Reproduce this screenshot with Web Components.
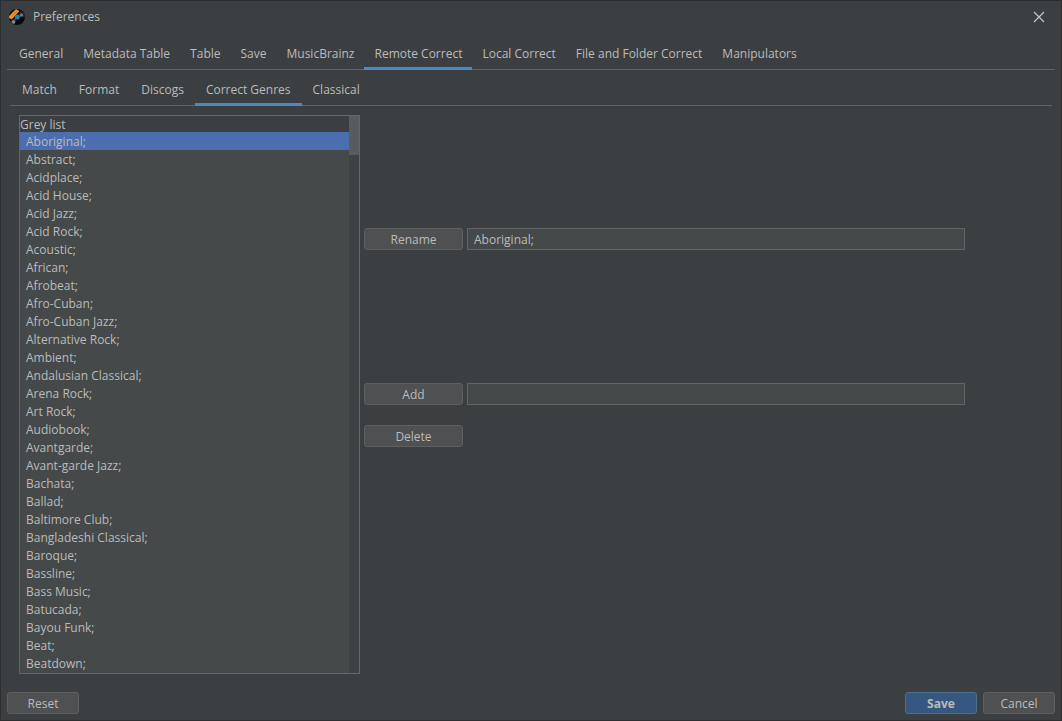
<!DOCTYPE html>
<html lang="en">
<head>
<meta charset="utf-8">
<title>Preferences</title>
<style>
  body {
    margin: 0;
    background: #3c3f41;
    color: #bbbbbb;
    font: 12px/18px "Open Sans", "Noto Sans", sans-serif;
  }
</style>
</head>
<body>
<preferences-window></preferences-window>
<script>
  const define = (name, html, setup) => {
    const template = document.createElement('template');
    template.innerHTML = html;
    customElements.define(name, class extends HTMLElement {
      connectedCallback() {
        if (this.shadowRoot) return;
        const root = this.attachShadow({ mode: 'open' });
        root.append(template.content.cloneNode(true));
        if (setup) setup(this, root);
      }
    });
  };

  // Window title bar with the application icon and the close control.
  define('title-bar', `
    <style>
      :host { display: flex; align-items: center; height: 31px; padding: 0 16px 0 8px; gap: 8px; }
      h1 { flex: 1; margin: 0; font: inherit; }
      svg { display: block; }
      button { padding: 0; border: 0; background: none; color: #c4c4c4; }
    </style>
    <svg width="16" height="16" viewBox="0 0 16 16" aria-hidden="true">
      <defs><clipPath id="disc"><circle cx="8" cy="8" r="8"/></clipPath></defs>
      <g clip-path="url(#disc)">
        <rect width="16" height="16" fill="#09090b"/>
        <path d="M8 8 12 2 16 5V8Z" fill="#2c2e30"/>
        <path d="M8 8 2 12 5 16Z" fill="#3c3e40"/>
        <circle cx="12.5" cy="6" r="1.6" fill="#77797b"/>
        <circle cx="4.5" cy="13" r="1.8" fill="#8b8b8b"/>
        <path d="M0 7 7 0 10.5 2 2.5 10.5 0 9Z" fill="#f28c28"/>
        <path d="M3.5 6.5 8.5 1.5" stroke="#b8641a" stroke-width=".6"/>
      </g>
      <circle cx="8.3" cy="8" r="2.5" fill="#0b83c9"/>
    </svg>
    <h1><slot></slot></h1>
    <button type="button" aria-label="Close">
      <svg width="12" height="12" viewBox="0 0 12 12"><path d="M1 1 11 11M11 1 1 11" stroke="currentColor" stroke-width="1.2"/></svg>
    </button>`);

  // Row of tabs; labels come from the "tabs" attribute, separated by "|".
  define('tab-strip', `
    <style>
      :host { display: block; --tab-padding: 10px; --tab-inset: 2px; }
      :host([nested]) { --tab-padding: 11px; --tab-inset: 1px; }
      div { display: flex; padding-left: var(--tab-inset); border-bottom: 1px solid #616365; }
      button {
        height: 33px; margin: 0 0 -1px; padding: 0 var(--tab-padding); border: 0; background: none;
        color: inherit; font: inherit; white-space: nowrap;
      }
      button[aria-selected="true"] { box-shadow: inset 0 -3px #4a88c7; }
    </style>
    <div role="tablist"></div>`, (host, root) => {
      const list = root.querySelector('div');
      for (const label of host.getAttribute('tabs').split('|')) {
        const tab = document.createElement('button');
        tab.type = 'button';
        tab.setAttribute('role', 'tab');
        tab.setAttribute('aria-selected', label === host.getAttribute('selected'));
        tab.textContent = label;
        list.append(tab);
      }
    });

  define('push-button', `
    <style>
      :host { display: block; width: 72px; }
      :host([wide]) { width: 99px; }
      button {
        display: block; box-sizing: border-box; width: 100%; height: 22px; padding: 2px 0 0;
        border: 1px solid #5e6060; border-radius: 3px;
        background: #4e5052; color: #bbbbbb; font: inherit;
      }
      :host([primary]) button { background: #365880; border-color: #4c708c; font-weight: 700; }
    </style>
    <button type="button"><slot></slot></button>`);

  define('text-field', `
    <style>
      :host { display: block; }
      input {
        display: block; box-sizing: border-box; width: 100%; height: 22px; padding: 0 6px;
        border: 1px solid #646464; border-radius: 0; outline: 0;
        background: #45494a; color: #bbbbbb; font: inherit;
      }
    </style>
    <input type="text">`, (host, root) => {
      const input = root.querySelector('input');
      input.setAttribute('aria-label', host.getAttribute('label'));
      input.value = host.getAttribute('value') || '';
    });

  // Titled genre list with a vertical scroll track.
  define('genre-list', `
    <style>
      :host { display: flex; box-sizing: border-box; width: 341px; border: 1px solid #466d94; }
      section { flex: 1; padding-bottom: 1px; background: #45494a; }
      h2 { margin: 0; height: 16px; background: #3c3f41; font: inherit; line-height: 18px; }
      ul { margin: 0; padding: 0; list-style: none; }
      li { height: 18px; padding: 0 6px; line-height: 20px; }
      li[aria-selected="true"] { background: #4b6eaf; }
      .track { width: 10px; background: #3e4244; }
      .thumb { height: 39px; background: #585c5e; }
    </style>
    <section>
      <h2 id="caption">Grey list</h2>
      <ul role="listbox" aria-labelledby="caption" tabindex="-1"></ul>
    </section>
    <div class="track"><div class="thumb"></div></div>`, (host, root) => {
      const genres = ['Aboriginal', 'Abstract', 'Acidplace', 'Acid House', 'Acid Jazz', 'Acid Rock',
        'Acoustic', 'African', 'Afrobeat', 'Afro-Cuban', 'Afro-Cuban Jazz', 'Alternative Rock',
        'Ambient', 'Andalusian Classical', 'Arena Rock', 'Art Rock', 'Audiobook', 'Avantgarde',
        'Avant-garde Jazz', 'Bachata', 'Ballad', 'Baltimore Club', 'Bangladeshi Classical',
        'Baroque', 'Bassline', 'Bass Music', 'Batucada', 'Bayou Funk', 'Beat', 'Beatdown'];
      const list = root.querySelector('ul');
      genres.forEach((genre, index) => {
        const item = document.createElement('li');
        item.setAttribute('role', 'option');
        item.setAttribute('aria-selected', index === 0);
        item.textContent = genre + ';';
        list.append(item);
      });
    });

  define('genre-editor', `
    <style>
      :host { display: flex; align-items: flex-start; gap: 4px; padding: 0 87px 0 9px; }
      form {
        flex: 1; display: grid; grid-template-columns: auto 1fr;
        gap: 20px 4px; margin: 0; padding-top: 113px;
      }
      .rename { margin-bottom: 113px; }
    </style>
    <genre-list></genre-list>
    <form>
      <push-button wide class="rename">Rename</push-button>
      <text-field label="Rename genre" value="Aboriginal;"></text-field>
      <push-button wide>Add</push-button>
      <text-field label="New genre"></text-field>
      <push-button wide>Delete</push-button>
    </form>`);

  define('preferences-window', `
    <style>
      :host {
        display: flex; flex-direction: column; box-sizing: border-box; min-height: 100vh;
        border: 1px solid #2b2d2f;
      }
      main { flex: 1; padding: 5px 6px 0; }
      .inner { padding: 3px 3px 0; }
      genre-editor { margin-top: 9px; }
      footer { display: flex; gap: 6px; padding: 6px; }
      .reset { margin-right: auto; }
    </style>
    <title-bar>Preferences</title-bar>
    <main>
      <tab-strip selected="Remote Correct"
        tabs="General|Metadata Table|Table|Save|MusicBrainz|Remote Correct|Local Correct|File and Folder Correct|Manipulators"></tab-strip>
      <div class="inner">
        <tab-strip nested selected="Correct Genres" tabs="Match|Format|Discogs|Correct Genres|Classical"></tab-strip>
        <genre-editor></genre-editor>
      </div>
    </main>
    <footer>
      <push-button class="reset">Reset</push-button>
      <push-button primary>Save</push-button>
      <push-button>Cancel</push-button>
    </footer>`);
</script>
</body>
</html>
